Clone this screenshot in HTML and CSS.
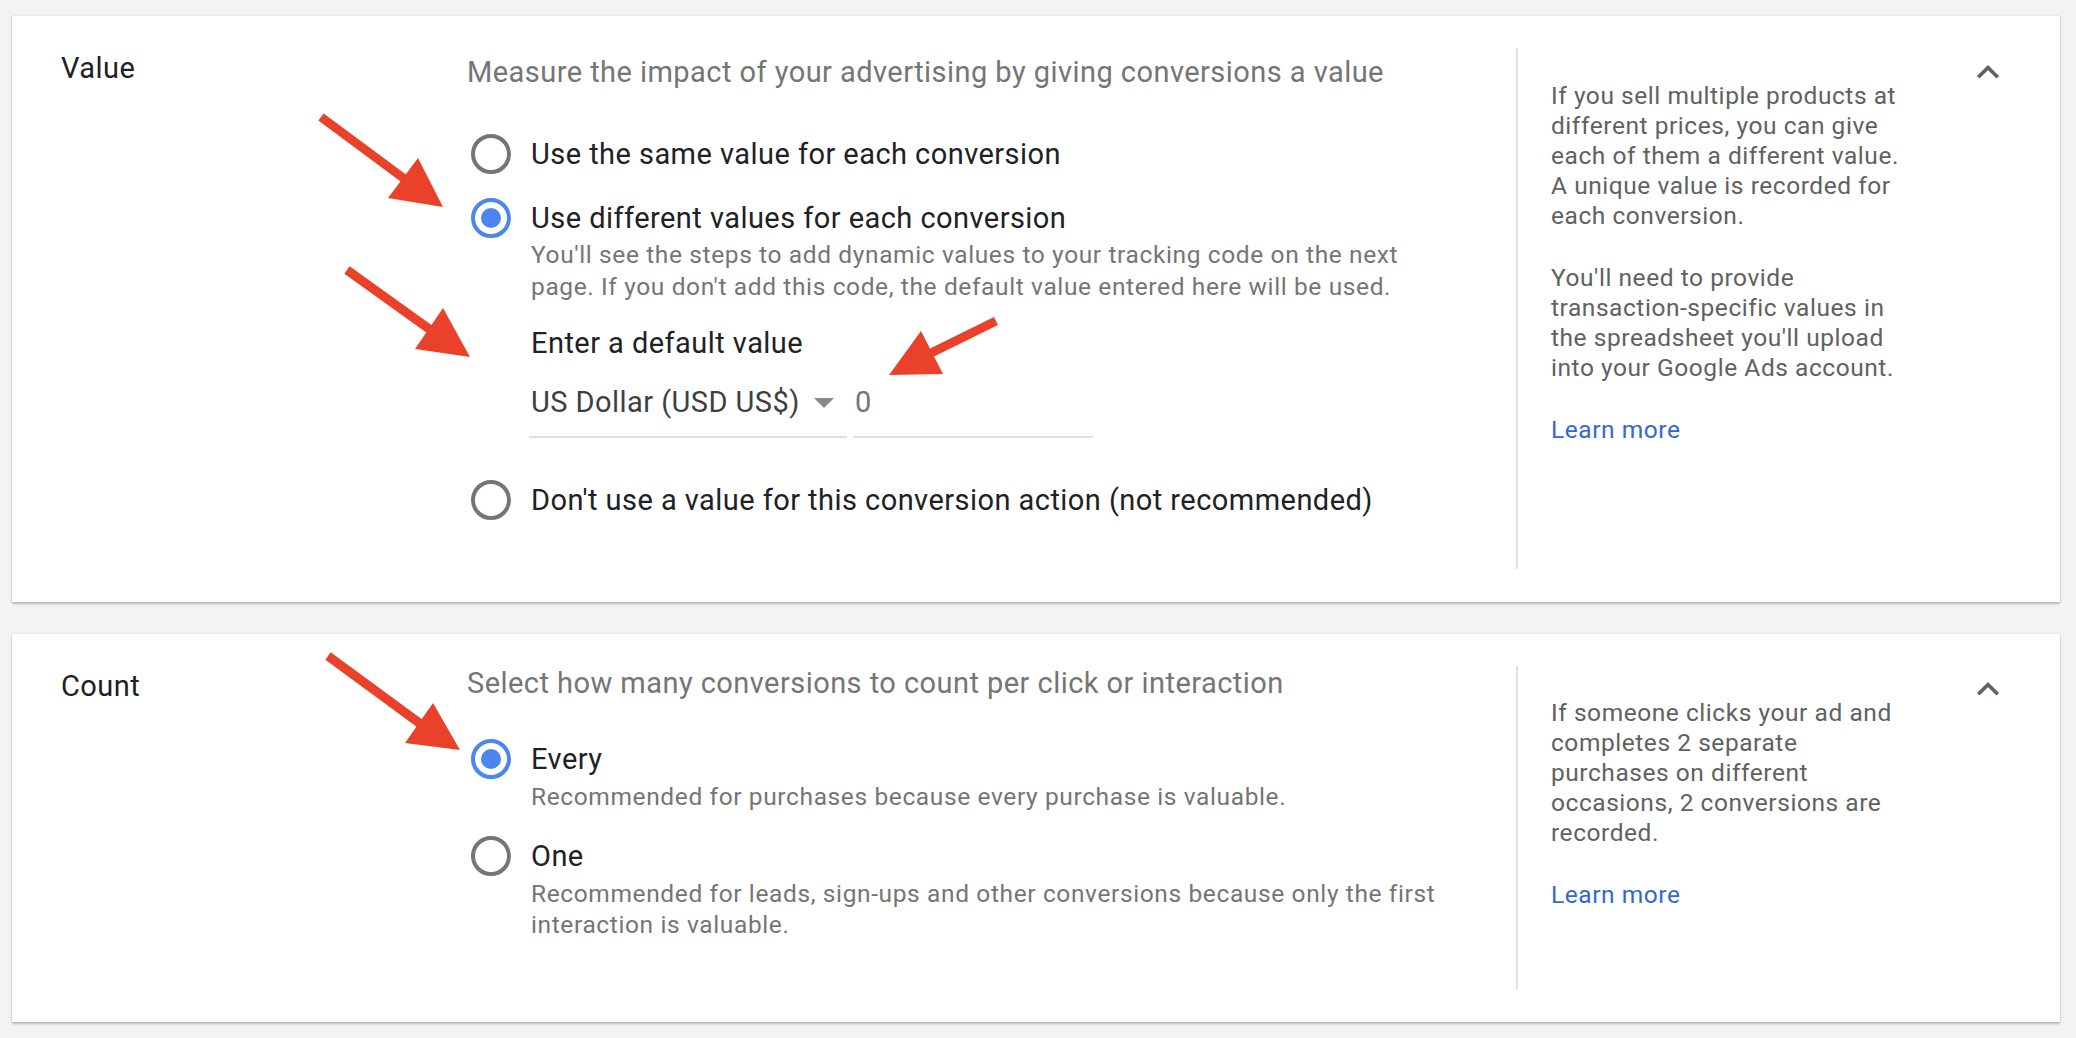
FILE: index.html
```html
<!DOCTYPE html>
<html lang="en">
<head>
<meta charset="utf-8">
<title>Conversion settings</title>
<link rel="stylesheet" href="styles.css">
</head>
<body>
<div class="page">
  <section class="card card-value">
    <div class="label">Value</div>
    <div class="main">
      <div class="heading">Measure the impact of your advertising by giving conversions a value</div>
      <div class="options">
        <div class="option">
          <div class="row"><span class="radio"></span><span class="opt-text">Use the same value for each conversion</span></div>
        </div>
        <div class="option">
          <div class="row"><span class="radio checked"></span><span class="opt-text">Use different values for each conversion</span></div>
          <div class="desc">You'll see the steps to add dynamic values to your tracking code on the next<br>page. If you don't add this code, the default value entered here will be used.</div>
          <div class="default">
            <div class="default-label">Enter a default value</div>
            <div class="fields">
              <div class="select"><span>US Dollar (USD US$)</span><span class="caret"></span></div>
              <div class="input">0</div>
            </div>
          </div>
        </div>
        <div class="option option-last">
          <div class="row"><span class="radio"></span><span class="opt-text">Don't use a value for this conversion action (not recommended)</span></div>
        </div>
      </div>
    </div>
    <aside class="side">
      <p>If you sell multiple products at<br>different prices, you can give<br>each of them a different value.<br>A unique value is recorded for<br>each conversion.</p>
      <p>You'll need to provide<br>transaction-specific values in<br>the spreadsheet you'll upload<br>into your Google Ads account.</p>
      <p class="learn">Learn more</p>
    </aside>
    <div class="toggle">
      <svg class="chevron" width="24" height="14" viewBox="0 0 24 14"><polyline points="2.2,12.2 12,2.6 21.8,12.2" fill="none" stroke="#5f6368" stroke-width="3.6"/></svg>
    </div>
  </section>

  <section class="card card-count">
    <div class="label">Count</div>
    <div class="main">
      <div class="heading">Select how many conversions to count per click or interaction</div>
      <div class="options">
        <div class="option">
          <div class="row"><span class="radio checked"></span><span class="opt-text">Every</span></div>
          <div class="desc">Recommended for purchases because every purchase is valuable.</div>
        </div>
        <div class="option">
          <div class="row"><span class="radio"></span><span class="opt-text">One</span></div>
          <div class="desc">Recommended for leads, sign-ups and other conversions because only the first<br>interaction is valuable.</div>
        </div>
      </div>
    </div>
    <aside class="side">
      <p>If someone clicks your ad and<br>completes 2 separate<br>purchases on different<br>occasions, 2 conversions are<br>recorded.</p>
      <p class="learn">Learn more</p>
    </aside>
    <div class="toggle">
      <svg class="chevron" width="24" height="14" viewBox="0 0 24 14"><polyline points="2.2,12.2 12,2.6 21.8,12.2" fill="none" stroke="#5f6368" stroke-width="3.6"/></svg>
    </div>
  </section>
</div>

<svg class="arrows" width="2076" height="1038" viewBox="0 0 2076 1038">
  <g fill="#e9412a" stroke="#e9412a">
    <line x1="321" y1="117" x2="406" y2="180" stroke-width="9"/>
    <polygon points="443,207 418,158 388,198" stroke="none"/>
    <line x1="347" y1="270" x2="432" y2="331" stroke-width="9"/>
    <polygon points="470,357 443,308 415,349" stroke="none"/>
    <line x1="996" y1="321" x2="929" y2="354" stroke-width="9"/>
    <polygon points="889,375 921,331 943,374" stroke="none"/>
    <line x1="328" y1="656" x2="422" y2="725" stroke-width="9"/>
    <polygon points="460,750 433,703 405,743" stroke="none"/>
  </g>
</svg>
</body>
</html>
```

FILE: styles.css
```css
html, body {
  margin: 0;
  padding: 0;
  background: #f1f3f4;
}

body {
  font-family: Roboto, "Liberation Sans", Arial, sans-serif;
  color: #202124;
  width: 2076px;
  height: 1038px;
  overflow: hidden;
}

.page {
  padding: 16px 0 0 12px;
  display: flex;
  flex-direction: column;
  gap: 32px;
}

.card {
  width: 2048px;
  background: #ffffff;
  display: flex;
  box-shadow: 0 2px 2px rgba(0, 0, 0, 0.22), 0 0 2px rgba(0, 0, 0, 0.12);
}

.label {
  flex: 0 0 455px;
  box-sizing: border-box;
  padding: 34px 0 0 49px;
  font-size: 29px;
  line-height: 36px;
  letter-spacing: 0.45px;
  color: #202124;
}

.main {
  flex: 1 1 0;
  min-width: 0;
}

.card-value .main {
  padding: 38px 0 82px 0;
}

.card-count .main {
  padding: 31.7px 0 81px 0;
}

.heading {
  font-size: 29px;
  line-height: 36px;
  letter-spacing: 0.45px;
  color: #757575;
  white-space: nowrap;
}

.card-value .options {
  margin-top: 43.5px;
}

.card-count .options {
  margin-top: 37.8px;
}

.option + .option {
  margin-top: 24px;
}

.card-value .option-last {
  margin-top: 42px;
}

.row {
  display: flex;
  align-items: center;
  height: 40px;
}

.radio {
  width: 40px;
  height: 40px;
  box-sizing: border-box;
  border: 4px solid #757575;
  border-radius: 50%;
  margin-left: 4px;
  margin-right: 20px;
  flex: 0 0 auto;
  display: flex;
  align-items: center;
  justify-content: center;
}

.radio.checked {
  border-color: #4a86ee;
}

.radio.checked::after {
  content: "";
  width: 20px;
  height: 20px;
  border-radius: 50%;
  background: #4a86ee;
}

.opt-text {
  font-size: 29px;
  line-height: 40px;
  letter-spacing: 0.45px;
  color: #202124;
  white-space: nowrap;
}

.desc {
  margin: 1.5px 0 0 64px;
  font-size: 24.5px;
  line-height: 31.5px;
  letter-spacing: 0.62px;
  color: #757575;
  white-space: nowrap;
}

.default {
  margin-left: 64px;
}

.default-label {
  margin-top: 23px;
  font-size: 29px;
  line-height: 36px;
  letter-spacing: 0.45px;
  color: #202124;
}

.fields {
  display: flex;
  gap: 6px;
  margin-top: 23px;
}

.select {
  width: 318px;
  box-sizing: border-box;
  padding: 0 0 15.6px 2px;
  border-bottom: 2px solid #e0e0e0;
  font-size: 29px;
  line-height: 36px;
  letter-spacing: 0.45px;
  color: #3c4043;
  display: flex;
  align-items: center;
  margin-left: -2px;
}

.caret {
  width: 0;
  height: 0;
  border-left: 10px solid transparent;
  border-right: 10px solid transparent;
  border-top: 10px solid #8a8a8a;
  margin-left: 14px;
  margin-top: 2px;
}

.input {
  width: 240px;
  box-sizing: border-box;
  padding: 0 0 15.6px 2px;
  border-bottom: 2px solid #e0e0e0;
  font-size: 29px;
  line-height: 36px;
  color: #757575;
}

.side {
  flex: 0 0 400px;
  margin: 32px 0 33px 0;
  border-left: 2px solid #e0e0e0;
  padding: 32.5px 0 0 33px;
  font-size: 24.5px;
  line-height: 30px;
  letter-spacing: 0.55px;
  color: #616161;
  white-space: nowrap;
}

.side p {
  margin: 0 0 32px 0;
}

.side .learn {
  color: #3367d6;
  margin: 0;
}

.toggle {
  flex: 0 0 84px;
  padding: 48.5px 0 0 25px;
}

.chevron {
  display: block;
}

.arrows {
  position: absolute;
  left: 0;
  top: 0;
  pointer-events: none;
}
```
